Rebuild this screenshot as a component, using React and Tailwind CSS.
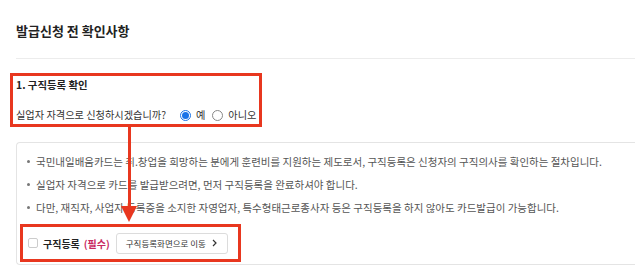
import React from "react";

const RED = "border-[#e8371f]";

const bullets = [
  "국민내일배움카드는 취.창업을 희망하는 분에게 훈련비를 지원하는 제도로서, 구직등록은 신청자의 구직의사를 확인하는 절차입니다.",
  "실업자 자격으로 카드를 발급받으려면, 먼저 구직등록을 완료하셔야 합니다.",
  "다만, 재직자, 사업자 등록증을 소지한 자영업자, 특수형태근로종사자 등은 구직등록을 하지 않아도 카드발급이 가능합니다.",
];

const Radio = ({ checked, label }) => (
  <label className="flex shrink-0 items-center gap-[5px]">
    <span
      className={
        checked
          ? "flex h-[11px] w-[11px] items-center justify-center rounded-full border border-[#1a73e8] bg-white"
          : "h-[11px] w-[11px] rounded-full border border-[#888] bg-white"
      }
    >
      {checked && <span className="h-[7px] w-[7px] rounded-full bg-[#1a73e8]" />}
    </span>
    <span>{label}</span>
  </label>
);

const App = () => {
  return (
    <div className="relative h-[277px] w-[635px] overflow-hidden bg-white pt-[23px] font-['Noto_Sans_CJK_KR',sans-serif] text-[#333]">
      {/* heading */}
      <h2 className="pl-4 text-[13px] font-bold leading-4 text-[#222]">발급신청 전 확인사항</h2>
      <div className="ml-4 mt-[19px] h-px bg-[#ececec]" />

      {/* step 1 */}
      <div className={`ml-[10px] mt-[14px] w-[252px] border-[3px] ${RED} pb-[2px] pl-[3px] pt-[2px]`}>
        <p className="text-[10.4px] font-bold leading-[14px] text-[#222]">1. 구직등록 확인</p>
        <div className="mt-4 flex items-center whitespace-nowrap text-[10.2px] leading-[14px]">
          <span className="mr-[14px] shrink-0">실업자 자격으로 신청하시겠습니까?</span>
          <Radio checked label="예" />
          <span className="w-[7px] shrink-0" />
          <Radio label="아니오" />
        </div>
      </div>

      {/* notice box */}
      <div className="ml-4 mt-[15px] rounded-l-[4px] border border-r-0 border-[#e4e4e4] pb-[2px] pt-[7px]">
        <ul className="pl-[10px] text-[10.5px] leading-[23px] text-[#555]">
          {bullets.map((b) => (
            <li key={b} className="flex items-center whitespace-nowrap">
              <span className="mr-[6px] h-[3px] w-[3px] shrink-0 rounded-full bg-[#777]" />
              <span>{b}</span>
            </li>
          ))}
        </ul>
        <div className={`ml-[3px] mt-[5px] flex h-[38px] w-[221px] items-center border-[3px] ${RED} pl-[5px]`}>
          <span className="h-[10px] w-[10px] rounded-[2px] border border-[#ccc] bg-white" />
          <span className="ml-[5px] text-[10px] font-bold text-[#222]">구직등록</span>
          <span className="ml-[4px] text-[10px] font-bold text-[#c8285f]">(필수)</span>
          <button className="ml-[6px] flex h-[21px] items-center rounded-[3px] border border-[#dcdcdc] bg-white pl-[9px] pr-[10px] text-[8.5px] text-[#333]">
            구직등록화면으로 이동
            <svg className="ml-[6px]" width="5" height="8" viewBox="0 0 5 8" fill="none">
              <path d="M1 1l3 3-3 3" stroke="#333" strokeWidth="1.2" />
            </svg>
          </button>
        </div>
      </div>

      {/* annotation arrow */}
      <div className="absolute left-[121px] top-[127px] flex flex-col items-center">
        <div className="h-[80px] w-[3px] bg-[#e8371f]" />
        <svg width="16" height="16" viewBox="0 0 16 16" className="-mt-[1px]">
          <path d="M0 0h16L8 16z" fill="#e8371f" />
        </svg>
      </div>
    </div>
  );
};

export default App;
